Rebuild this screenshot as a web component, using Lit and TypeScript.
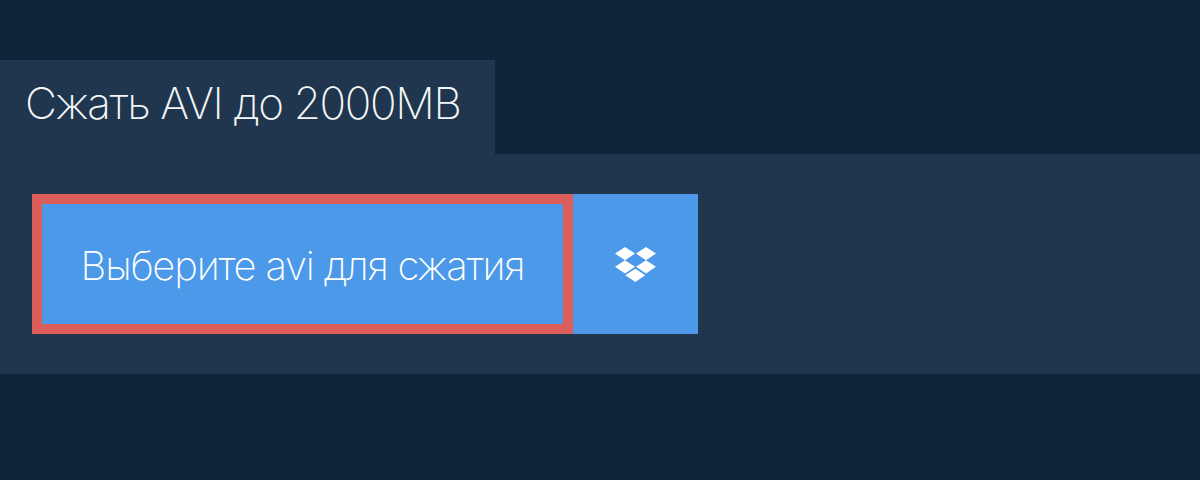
import { LitElement, html, css } from "lit";
import { customElement } from "lit/decorators.js";

@customElement("app-root")
export class AppRoot extends LitElement {
  static styles = css`
    :host { display: block; width: 1200px; height: 480px; background: #0d2539; font-family: Inter, "Noto Sans", sans-serif; color: #fff; font-weight: 200; overflow: hidden; }
    .wrap { padding-top: 60px; }
    .tab { display: inline-flex; align-items: center; height: 94px; width: 495px; padding: 0 0 8px 25px; background: #1f364e; font-size: 44px; letter-spacing: -0.03em; color: #f4f6f8; box-sizing: border-box; vertical-align: top; }
    .panel { background: #1f364e; padding: 40px 32px; height: 220px; box-sizing: border-box; display: flex; }
    .btn { width: 541px; height: 140px; box-sizing: border-box; background: #4b99e8; border: 10px solid #db5e5b; display: flex; align-items: center; justify-content: center; font-size: 40px; letter-spacing: -0.03em; padding-top: 2px; }
    .drop { width: 125px; height: 140px; background: #4b99e8; display: flex; align-items: center; justify-content: center; }
    svg { width: 41px; height: 35px; fill: #fff; }
  `;
  render() {
    return html`<div class="wrap">
      <div class="tab">Сжать AVI до 2000MB</div>
      <div class="panel">
        <div class="btn">Выберите avi для сжатия</div>
        <div class="drop"><svg viewBox="0 0 41 35"><path d="M10 0 0 6.6l10 6.6 10-6.6zM31 0 21 6.6l10 6.6 10-6.6zM10 13.2 0 19.8l10 6.6 10-6.6zM31 13.2l-10 6.6 10 6.6 10-6.6zM20.3 21.7l-10 6.6 10 6.7 10-6.7z"/></svg></div>
      </div>
    </div>`;
  }
}
